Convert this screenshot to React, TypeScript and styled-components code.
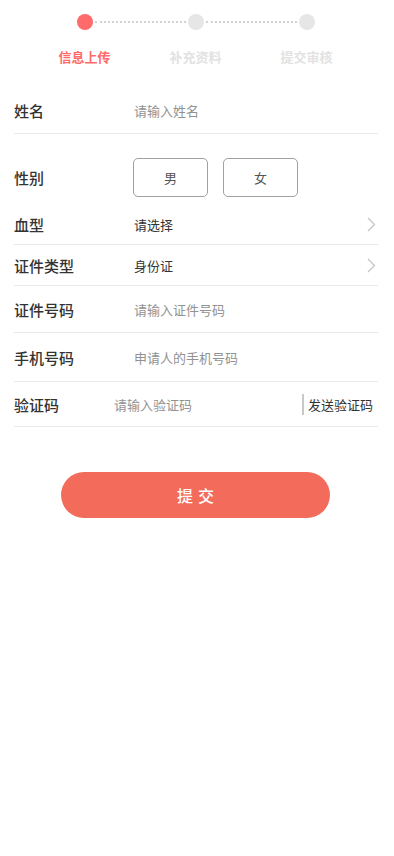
import React, { useState } from "react"
import styled, { createGlobalStyle } from "styled-components"

const GlobalStyle = createGlobalStyle`
  html, body {
    margin: 0;
    padding: 0;
    background: #fff;
  }
  body {
    font-family: "Noto Sans CJK SC", "Noto Sans", sans-serif;
    color: #333;
  }
  * {
    box-sizing: border-box;
  }
`

const Page = styled.div`
  width: 394px;
  min-height: 856px;
  background: #fff;
`

const Steps = styled.div`
  display: grid;
  grid-template-columns: repeat(3, 111px);
  justify-content: center;
  padding-top: 14px;
  margin-left: -3px;
`

const Step = styled.div<{ $last?: boolean }>`
  position: relative;
  display: flex;
  flex-direction: column;
  align-items: center;

  &::after {
    content: "";
    display: ${(p) => (p.$last ? "none" : "block")};
    position: absolute;
    top: 7px;
    left: calc(50% + 10px);
    width: 91px;
    height: 0;
    border-top: 2px dotted #d2d2d2;
  }
`

const Dot = styled.div<{ $active?: boolean }>`
  width: 16px;
  height: 16px;
  border-radius: 50%;
  background: ${(p) => (p.$active ? "#ff6b6b" : "#e6e6e6")};
`

const StepLabel = styled.div<{ $active?: boolean }>`
  margin-top: 18px;
  font-size: 13px;
  line-height: 18px;
  font-weight: 700;
  color: ${(p) => (p.$active ? "#ff6b6b" : "#e2e2e2")};
`

const Form = styled.div`
  margin-top: 22px;
  padding: 0 16px 0 14px;
`

const Row = styled.div<{ $h: number }>`
  display: flex;
  align-items: center;
  height: ${(p) => p.$h}px;
  border-bottom: 1px solid #e8e8e8;
`

const GenderRow = styled.div`
  display: flex;
  align-items: center;
  gap: 15px;
  padding: 24px 0 8px;
`

const Label = styled.div<{ $w?: number }>`
  width: ${(p) => p.$w ?? 120}px;
  flex-shrink: 0;
  font-size: 15px;
  font-weight: 500;
  color: #333;
`

const GenderLabel = styled(Label)`
  width: 104px;
`

const Input = styled.input`
  flex: 1;
  min-width: 0;
  border: none;
  outline: none;
  padding: 0;
  background: transparent;
  font-family: inherit;
  font-size: 13px;
  color: #333;

  &::placeholder {
    color: #929292;
  }
`

const Value = styled.div`
  flex: 1;
  font-size: 13px;
  color: #333;
`

const Chevron = styled.svg`
  width: 9px;
  height: 15px;
  margin-right: 2px;
`

const GenderBtn = styled.button<{ $on?: boolean }>`
  width: 75px;
  height: 39px;
  border: 1px solid ${(p) => (p.$on ? "#f26b5b" : "#a0a0a0")};
  border-radius: 5px;
  background: #fff;
  font-family: inherit;
  font-size: 13px;
  color: ${(p) => (p.$on ? "#f26b5b" : "#555")};
  cursor: pointer;
`

const SendCode = styled.button`
  border: none;
  border-left: 2px solid #c8c8c8;
  background: transparent;
  padding: 0 0 0 4px;
  margin-right: 5px;
  height: 21px;
  font-family: inherit;
  font-size: 13px;
  color: #333;
  cursor: pointer;
`

const Submit = styled.button`
  display: block;
  width: 269px;
  height: 46px;
  margin: 45px 0 0 61px;
  border: none;
  border-radius: 23px;
  background: #f26b5b;
  color: #fff;
  font-family: inherit;
  font-size: 16px;
  font-weight: 500;
  letter-spacing: 5px;
  text-indent: 5px;
  cursor: pointer;
`

const Arrow = () => (
  <Chevron viewBox="0 0 9 15">
    <path d="M1 1l6.5 6.5L1 14" fill="none" stroke="#c4c4c4" strokeWidth="1.3" />
  </Chevron>
)

const steps = ["信息上传", "补充资料", "提交审核"]

export default function App() {
  const [gender, setGender] = useState<string | null>(null)

  return (
    <Page>
      <GlobalStyle />
      <Steps>
        {steps.map((s, i) => (
          <Step key={s} $last={i === steps.length - 1}>
            <Dot $active={i === 0} />
            <StepLabel $active={i === 0}>{s}</StepLabel>
          </Step>
        ))}
      </Steps>

      <Form>
        <Row $h={46}>
          <Label>姓名</Label>
          <Input placeholder="请输入姓名" />
        </Row>
        <GenderRow>
          <GenderLabel>性别</GenderLabel>
          {["男", "女"].map((g) => (
            <GenderBtn key={g} $on={gender === g} onClick={() => setGender(g)}>
              {g}
            </GenderBtn>
          ))}
        </GenderRow>
        <Row $h={40}>
          <Label>血型</Label>
          <Value>请选择</Value>
          <Arrow />
        </Row>
        <Row $h={41}>
          <Label>证件类型</Label>
          <Value>身份证</Value>
          <Arrow />
        </Row>
        <Row $h={47}>
          <Label>证件号码</Label>
          <Input placeholder="请输入证件号码" />
        </Row>
        <Row $h={49}>
          <Label>手机号码</Label>
          <Input placeholder="申请人的手机号码" />
        </Row>
        <Row $h={45}>
          <Label $w={100}>验证码</Label>
          <Input placeholder="请输入验证码" />
          <SendCode>发送验证码</SendCode>
        </Row>
      </Form>

      <Submit>提交</Submit>
    </Page>
  )
}
